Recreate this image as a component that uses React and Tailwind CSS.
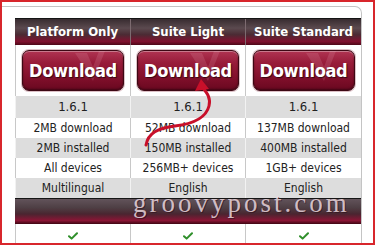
const HEADERS = ["Platform Only", "Suite Light", "Suite Standard"];
const ROWS = [
  { cells: ["2MB download", "52MB download", "137MB download"], gray: false },
  { cells: ["2MB installed", "150MB installed", "400MB installed"], gray: true },
  { cells: ["All devices", "256MB+ devices", "1GB+ devices"], gray: false },
  { cells: ["Multilingual", "English", "English"], gray: true },
];

function DownloadButton() {
  return (
    <div className="relative w-[102px] h-[41px] rounded-[7px] border border-[#3d0814] bg-[linear-gradient(180deg,#b03452_0%,#981c3a_30%,#86112d_62%,#690820_100%)] shadow-[0_0_0_1px_#dcc0c6,inset_0_1px_0_rgba(255,255,255,0.35),inset_0_-1px_2px_rgba(0,0,0,0.4)] flex items-center justify-center overflow-hidden">
      <svg className="absolute left-[50px] top-0" width="34" height="32" viewBox="0 0 34 32">
        <path d="M2 2 L14 2 L20 16 L26 0 L32 0 L20 30 Z" fill="rgba(255,200,215,0.14)" />
      </svg>
      <span className="relative text-white font-bold text-[18px] tracking-[-0.3px] [text-shadow:1px_1px_1px_rgba(0,0,0,0.6)]">
        Download
      </span>
    </div>
  );
}

function Check() {
  return (
    <svg width="10" height="8" viewBox="0 0 10 8">
      <path d="M1 4.2 L3.6 6.6 L9 1.2" fill="none" stroke="#2f8f2a" strokeWidth="2" strokeLinecap="round" strokeLinejoin="round" />
    </svg>
  );
}

export default function App() {
  return (
    <div className="relative w-[375px] h-[245px] overflow-hidden border-2 border-[#d8262c] bg-white pt-[4px] font-['DejaVu_Sans_Condensed','DejaVu_Sans',sans-serif]">
      <div className="h-full mr-[11px] border-t border-r border-[#c4c4c4] rounded-tr-[7px] pt-[11px] pl-[13px]">
        <div className="w-[346px]">
          {/* header */}
          <div className="grid grid-cols-[115px_115px_116px] h-[27px] border-t border-[#151515] bg-[linear-gradient(180deg,#382c30_0%,#5b4a4f_35%,#4b2b34_60%,#80112f_86%,#4e0818_100%)]">
            {HEADERS.map((h, i) => (
              <div key={h} className={`flex items-center justify-center text-white font-bold text-[13px] ${i === 0 ? "" : "border-l border-[#7d6b70]"}`}>
                {h}
              </div>
            ))}
          </div>
          {/* buttons */}
          <div className="grid grid-cols-[115px_115px_116px] h-[51px] bg-white">
            {HEADERS.map((h) => (
              <div key={h} className="flex items-center justify-center border-l border-[#c8c8c8]">
                <DownloadButton />
              </div>
            ))}
          </div>
          {/* version */}
          <div className="grid grid-cols-[115px_115px_116px] h-[22px] bg-[#dddddd]">
            {HEADERS.map((h) => (
              <div key={h} className="flex items-center justify-center border-l border-[#f2f2f2] text-[13px] text-[#222]">
                1.6.1
              </div>
            ))}
          </div>
          {ROWS.map((r, ri) => (
            <div key={ri} className={`grid grid-cols-[115px_115px_116px] h-[20px] ${r.gray ? "bg-[#dddddd]" : "bg-white"}`}>
              {r.cells.map((c, ci) => (
                <div key={ci} className={`flex items-center justify-center border-l text-[12px] text-[#222] ${r.gray ? "border-[#f2f2f2]" : "border-[#c8c8c8]"}`}>
                  {c}
                </div>
              ))}
            </div>
          ))}
          {/* bottom band */}
          <div className="h-[26px] border-t border-[#151515] bg-[linear-gradient(180deg,#62535a_0%,#4e3f44_35%,#4a2530_60%,#8a1535_86%,#3e0612_100%)]" />
          {/* checks */}
          <div className="grid grid-cols-[115px_115px_116px] h-[20px] bg-white">
            {HEADERS.map((h) => (
              <div key={h} className="flex items-end justify-center pb-[4px] border-l border-[#c8c8c8]">
                <Check />
              </div>
            ))}
          </div>
        </div>
      </div>

      {/* watermark */}
      <div className="absolute left-[131px] top-[196px] font-['Liberation_Serif',serif] text-[27px] leading-[10px] tracking-[3px] text-[rgba(240,222,228,0.82)] [text-shadow:1px_1px_0_rgba(40,10,20,0.5)]">
        groovypost.com
      </div>

      {/* red arrow */}
      <svg className="absolute left-[-2px] top-[-2px] pointer-events-none" width="375" height="245" viewBox="0 0 375 245">
        <path d="M146,145 C148,133 158,128 175,126 C192,124 206,118 209,106 C211,98 207,93 203,88" fill="none" stroke="#c8102a" strokeWidth="3" strokeLinecap="round" />
        <path d="M201,79 L195,91 L209,89 Z" fill="#c8102a" />
      </svg>
    </div>
  );
}
